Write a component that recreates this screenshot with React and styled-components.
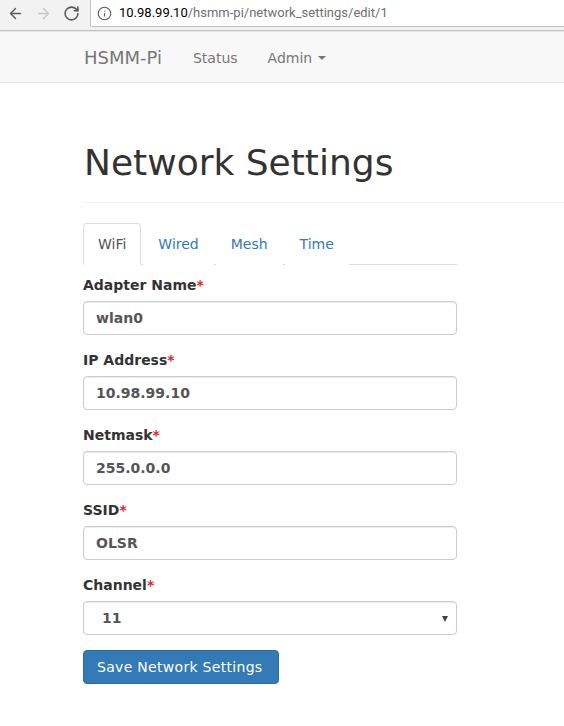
import React from "react";
import styled, { createGlobalStyle } from "styled-components";
import { ArrowLeft, ArrowRight, RotateCw, Info } from "lucide-react";

const GlobalStyle = createGlobalStyle`
  html, body {
    margin: 0;
    padding: 0;
    background: #fff;
    overflow: hidden;
  }
  body {
    font-family: "DejaVu Sans", Verdana, sans-serif;
    font-size: 14px;
    line-height: 20px;
    color: #333;
  }
  * {
    box-sizing: border-box;
  }
`;

const BrowserBar = styled.div`
  display: flex;
  align-items: flex-start;
  height: 31px;
  background: #f2f2f2;
  border-bottom: 1px solid #c2c2c2;
`;

const NavButtons = styled.div`
  display: flex;
  align-items: center;
  gap: 11px;
  height: 26px;
  padding-left: 7px;
  margin-right: 10px;
`;

const AddressBox = styled.div`
  flex: 1;
  display: flex;
  align-items: center;
  height: 27px;
  padding-left: 6px;
  background: #fff;
  border: 1px solid #c4c4c4;
  border-top: none;
  border-right: none;
  border-radius: 0 0 0 2px;
  font-family: Roboto, "Liberation Sans", sans-serif;
  font-size: 13px;
  color: #6f6f6f;
  white-space: nowrap;

  svg {
    margin-right: 7px;
  }

  b {
    font-weight: 400;
    color: #000;
  }
`;

const Navbar = styled.nav`
  display: flex;
  align-items: center;
  height: 52px;
  padding: 2px 0 0 84px;
  background: #f8f8f8;
  border-top: 1px solid #e7e7e7;
  border-bottom: 1px solid #e7e7e7;
  color: #777;
`;

const Brand = styled.a`
  font-size: 18px;
  color: #777;
  margin-right: 16px;
`;

const NavLink = styled.a`
  display: flex;
  align-items: center;
  padding: 0 15px;
  color: #777;
`;

const Caret = styled.span`
  display: inline-block;
  margin-left: 6px;
  border-top: 4px solid #777;
  border-left: 4px solid transparent;
  border-right: 4px solid transparent;
`;

const Main = styled.main`
  padding: 20px 0 0 83px;
`;

const PageHeader = styled.div`
  margin: 40px 0 20px;
  padding-bottom: 9px;
  border-bottom: 1px solid #eee;
`;

const Title = styled.h1`
  margin: 0 0 10px 1px;
  font-size: 36px;
  line-height: 39.6px;
  font-weight: 500;
  color: #333;
`;

const Content = styled.div`
  width: 374px;
`;

const TabList = styled.ul`
  display: flex;
  margin: 0;
  padding: 0;
  list-style: none;
  border-bottom: 1px solid #ddd;
`;

const Tab = styled.li`
  margin-right: 2px;
  margin-bottom: -1px;
  padding: 10px 14px;
  line-height: 20px;
  border: 1px solid ${(p) => (p.$active ? "#ddd" : "transparent")};
  border-bottom-color: transparent;
  border-radius: 4px 4px 0 0;
  background: #fff;
  color: ${(p) => (p.$active ? "#555" : "#337ab7")};
`;

const Form = styled.form`
  padding-top: 10px;
`;

const Group = styled.div`
  margin-bottom: 15px;
`;

const Label = styled.label`
  display: block;
  margin-bottom: 6px;
  font-weight: bold;
  line-height: 20px;
  color: #333;

  span {
    color: #e8231f;
  }
`;

const Input = styled.input`
  display: block;
  width: 100%;
  height: 34px;
  padding: 6px 12px;
  font-family: inherit;
  font-size: 14px;
  font-weight: bold;
  color: #555;
  background: #fff;
  border: 1px solid #ccc;
  border-radius: 4px;
  box-shadow: inset 0 1px 1px rgba(0, 0, 0, 0.075);
  outline: none;
`;

const SelectWrap = styled.div`
  position: relative;

  &::after {
    content: "";
    position: absolute;
    right: 9px;
    top: 15px;
    border-top: 6px solid #444;
    border-left: 3px solid transparent;
    border-right: 3px solid transparent;
    pointer-events: none;
  }
`;

const Select = styled.select`
  display: block;
  width: 100%;
  height: 34px;
  padding: 6px 12px 6px 18px;
  font-family: inherit;
  font-size: 14px;
  font-weight: bold;
  color: #555;
  background: #fff;
  border: 1px solid #ccc;
  border-radius: 4px;
  box-shadow: inset 0 1px 1px rgba(0, 0, 0, 0.075);
  appearance: none;
  outline: none;
`;

const Button = styled.button`
  padding: 6px 16px 6px 13px;
  font-family: inherit;
  font-size: 14px;
  line-height: 20px;
  letter-spacing: 0.3px;
  color: #fff;
  background: #337ab7;
  border: 1px solid #2e6da4;
  border-radius: 4px;
`;

const fields = [
  { label: "Adapter Name", value: "wlan0" },
  { label: "IP Address", value: "10.98.99.10" },
  { label: "Netmask", value: "255.0.0.0" },
  { label: "SSID", value: "OLSR" },
];

export default function App() {
  return (
    <>
      <GlobalStyle />
      <BrowserBar>
        <NavButtons>
          <ArrowLeft size={17} color="#5a5a5a" strokeWidth={2} />
          <ArrowRight size={17} color="#c6c6c6" strokeWidth={2} />
          <RotateCw size={17} color="#5a5a5a" strokeWidth={2.2} />
        </NavButtons>
        <AddressBox>
          <Info size={15} color="#5a5a5a" strokeWidth={1.8} />
          <b>10.98.99.10</b>/hsmm-pi/network_settings/edit/1
        </AddressBox>
      </BrowserBar>

      <Navbar>
        <Brand>HSMM-Pi</Brand>
        <NavLink>Status</NavLink>
        <NavLink>
          Admin
          <Caret />
        </NavLink>
      </Navbar>

      <Main>
        <PageHeader>
          <Title>Network Settings</Title>
        </PageHeader>

        <Content>
          <TabList>
            <Tab $active>WiFi</Tab>
            <Tab>Wired</Tab>
            <Tab>Mesh</Tab>
            <Tab>Time</Tab>
          </TabList>

          <Form>
            {fields.map((f) => (
              <Group key={f.label}>
                <Label>
                  {f.label}
                  <span>*</span>
                </Label>
                <Input defaultValue={f.value} />
              </Group>
            ))}
            <Group>
              <Label>
                Channel<span>*</span>
              </Label>
              <SelectWrap>
                <Select defaultValue="11">
                  <option value="11">11</option>
                </Select>
              </SelectWrap>
            </Group>
            <Button type="button">Save Network Settings</Button>
          </Form>
        </Content>
      </Main>
    </>
  );
}
